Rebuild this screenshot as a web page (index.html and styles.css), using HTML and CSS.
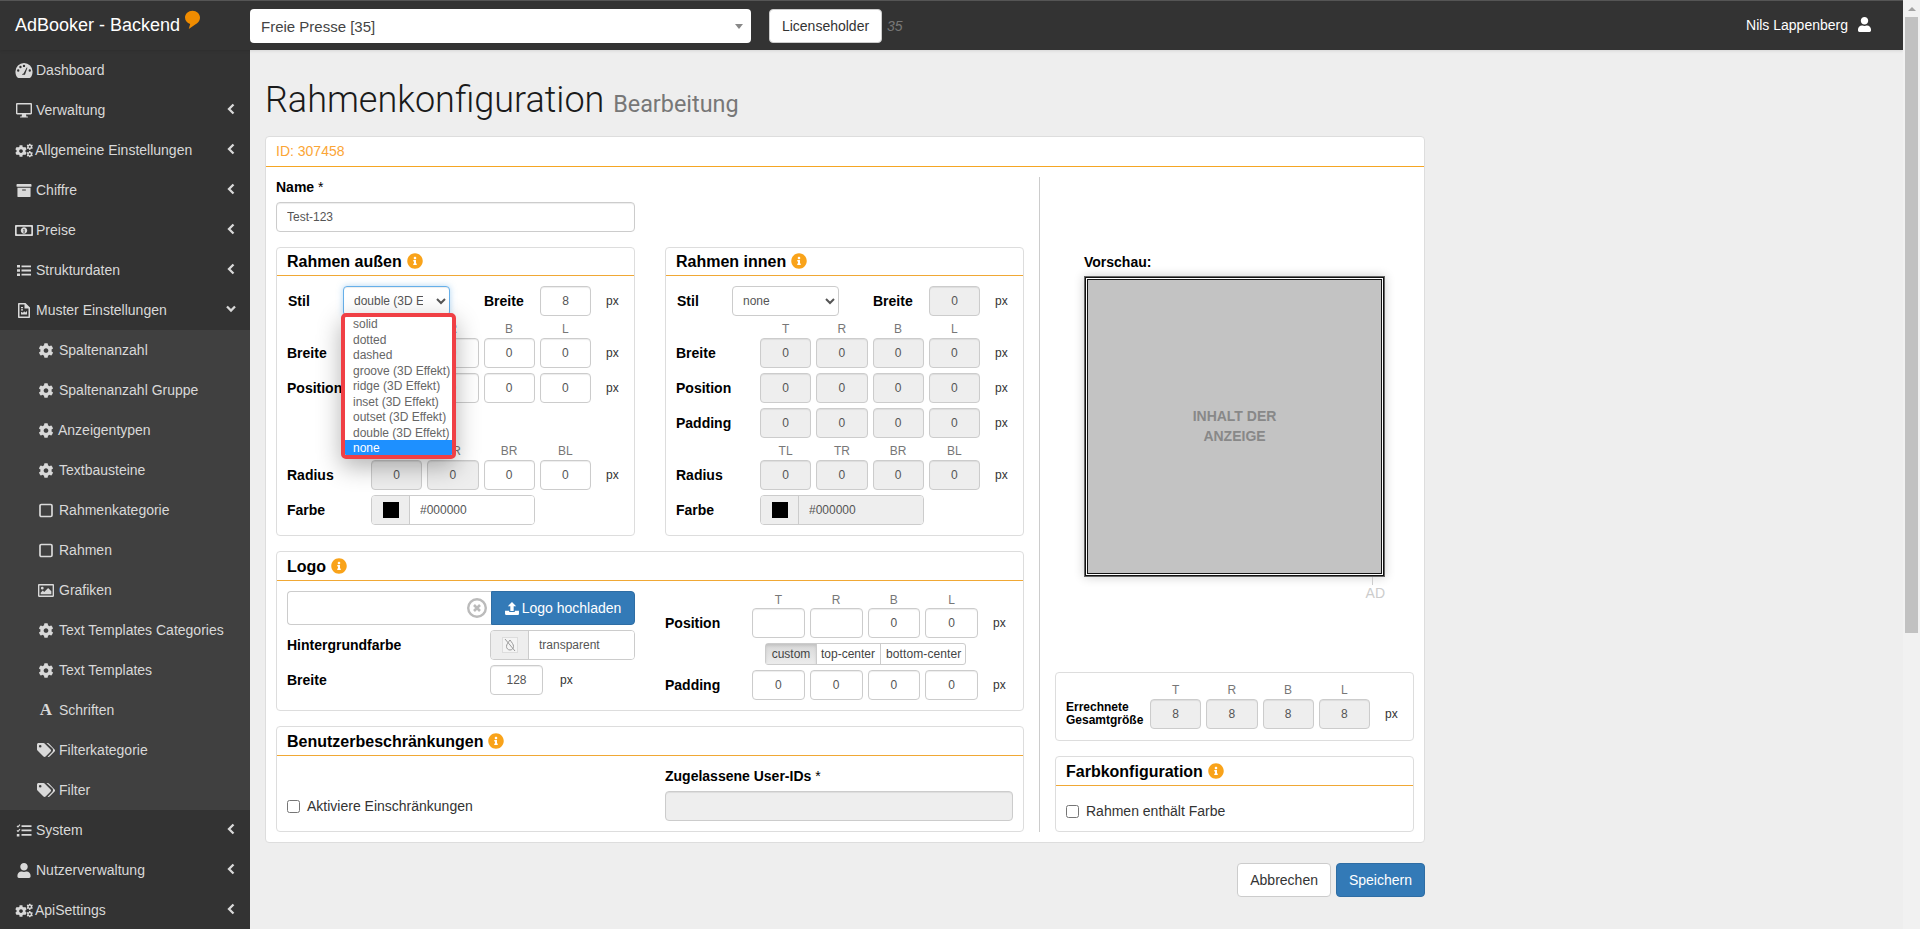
FILE: index.html
```html
<!DOCTYPE html>
<html lang="de">
<head>
<meta charset="utf-8">
<title>Rahmenkonfiguration</title>
<link rel="stylesheet" href="styles.css">
</head>
<body>
<svg class="defs" aria-hidden="true">
  <defs>
    <symbol id="i-user" viewBox="0 0 448 512"><path d="M224 256c70.7 0 128-57.3 128-128S294.7 0 224 0 96 57.3 96 128s57.3 128 128 128zm89.6 32h-16.7c-22.2 10.2-46.9 16-72.9 16s-50.6-5.8-72.9-16h-16.7C60.2 288 0 348.2 0 422.4V464c0 26.5 21.5 48 48 48h352c26.5 0 48-21.5 48-48v-41.6c0-74.2-60.2-134.4-134.4-134.4z"/></symbol>
    <symbol id="i-info" viewBox="0 0 512 512"><path d="M256 8C119 8 8 119.043 8 256c0 137 111 248 248 248s248-111 248-248C504 119.043 393 8 256 8zm0 110c23.196 0 42 18.804 42 42s-18.804 42-42 42-42-18.804-42-42 18.804-42 42-42zm56 254c0 6.627-5.373 12-12 12h-88c-6.627 0-12-5.373-12-12v-24c0-6.627 5.373-12 12-12h12v-64h-12c-6.627 0-12-5.373-12-12v-24c0-6.627 5.373-12 12-12h64c6.627 0 12 5.373 12 12v100h12c6.627 0 12 5.373 12 12v24z"/></symbol>
    <symbol id="i-cog" viewBox="0 0 512 512"><path d="M487.4 315.7l-42.6-24.6c4.3-23.2 4.3-47 0-70.2l42.6-24.6c4.9-2.8 7.1-8.6 5.5-14-11.1-35.6-30-67.8-54.7-94.6-3.8-4.1-10-5.1-14.8-2.3L380.8 110c-17.9-15.4-38.5-27.3-60.8-35.1V25.8c0-5.6-3.9-10.5-9.4-11.7-36.7-8.2-74.3-7.8-109.2 0-5.5 1.2-9.4 6.1-9.4 11.7V75c-22.2 7.9-42.8 19.8-60.8 35.1L88.7 85.5c-4.9-2.8-11-1.9-14.8 2.3-24.7 26.7-43.6 58.9-54.7 94.6-1.7 5.4.6 11.2 5.5 14L67.3 221c-4.3 23.2-4.3 47 0 70.2l-42.6 24.6c-4.9 2.8-7.1 8.6-5.5 14 11.1 35.6 30 67.8 54.7 94.6 3.8 4.1 10 5.1 14.8 2.3l42.6-24.6c17.9 15.4 38.5 27.3 60.8 35.1v49.2c0 5.6 3.9 10.5 9.4 11.7 36.7 8.2 74.3 7.8 109.2 0 5.5-1.2 9.4-6.1 9.4-11.7v-49.2c22.2-7.9 42.8-19.8 60.8-35.1l42.6 24.6c4.9 2.8 11 1.9 14.8-2.3 24.7-26.7 43.6-58.9 54.7-94.6 1.5-5.5-.7-11.3-5.6-14.1zM256 336c-44.1 0-80-35.9-80-80s35.9-80 80-80 80 35.9 80 80-35.9 80-80 80z"/></symbol>
    <symbol id="i-cogs" viewBox="0 0 18 14"><use href="#i-cog" x="0" y="1.5" width="12" height="12"/><use href="#i-cog" x="11.5" y="0" width="6.5" height="6.5"/><use href="#i-cog" x="11.5" y="7.5" width="6.5" height="6.5"/></symbol>
    <symbol id="i-gauge" viewBox="0 0 16 14"><path fill-rule="evenodd" d="M8 0a8 8 0 0 1 8 8c0 2.2-.6 4.2-1.7 5.4-.3.4-.7.6-1.2.6H2.9c-.5 0-.9-.2-1.2-.6C.6 12.2 0 10.2 0 8a8 8 0 0 1 8-8zM2.6 8.1a1.1 1.1 0 1 0 0-2.2 1.1 1.1 0 0 0 0 2.2zM4.7 4.8a1.1 1.1 0 1 0 0-2.2 1.1 1.1 0 0 0 0 2.2zM8 3.8a1.1 1.1 0 1 0 0-2.2 1.1 1.1 0 0 0 0 2.2zM13.4 8.1a1.1 1.1 0 1 0 0-2.2 1.1 1.1 0 0 0 0 2.2zM7.4 11h1.5l2.2-6.4c.1-.4-.5-.6-.7-.2L7.6 9.7c-.9.1-1.4.7-1.4 1.3z"/></symbol>
    <symbol id="i-desktop" viewBox="0 0 16 15"><path fill-rule="evenodd" d="M1.2 0h13.6c.7 0 1.2.5 1.2 1.2v9.1c0 .7-.5 1.2-1.2 1.2H10l.4 1.9h1.5v1.1H4.1v-1.1h1.5l.4-1.9H1.2C.5 11.5 0 11 0 10.3V1.2C0 .5.5 0 1.2 0zM1.4 1.4v8.7h13.2V1.4z"/></symbol>
    <symbol id="i-archive" viewBox="0 0 512 512"><path d="M32 448c0 17.7 14.3 32 32 32h384c17.7 0 32-14.3 32-32V160H32v288zm160-212c0-6.6 5.4-12 12-12h104c6.6 0 12 5.4 12 12v8c0 6.6-5.4 12-12 12H204c-6.6 0-12-5.4-12-12v-8zM480 32H32C14.3 32 0 46.3 0 64v48c0 8.8 7.2 16 16 16h480c8.8 0 16-7.2 16-16V64c0-17.7-14.3-32-32-32z"/></symbol>
    <symbol id="i-money" viewBox="0 0 18 11"><path fill-rule="evenodd" d="M.8 0h16.4c.4 0 .8.4.8.8v9.4c0 .4-.4.8-.8.8H.8c-.4 0-.8-.4-.8-.8V.8C0 .4.4 0 .8 0zM2.3 1.7 1.7 2.3v6.4l.6.6h13.4l.6-.6V2.3l-.6-.6zM9 2.3c1.8 0 3.2 1.4 3.2 3.2S10.8 8.7 9 8.7 5.8 7.3 5.8 5.5 7.2 2.3 9 2.3zM8.3 4v.7h.4v2h-.5v.7h1.7v-.7h-.4V4z"/></symbol>
    <symbol id="i-list" viewBox="-2 -2 18 15"><path d="M0 0h3v2.6H0zM4.500.4H14v1.800H4.500zM0 4.200h3v2.600H0zM4.500 4.600H14v1.800H4.500zM0 8.400h3V11H0zM4.500 8.800H14v1.800H4.500z"/></symbol>
    <symbol id="i-file" viewBox="0 0 12 15"><path fill-rule="evenodd" d="M1 0h6.500L12 4.500V14c0 .6-.4 1-1 1H1c-.6 0-1-.4-1-1V1c0-.6.4-1 1-1zM1.500 1.500v12h9V5.500H6.500v-4zM3 4h2v1.200H3zM3 6.200h2v1.200H3zM3 8.800l2 1 1.200-1.500 1 1.200L9 8v3.500H3z"/></symbol>
    <symbol id="i-square" viewBox="0 0 15 15"><rect x="1.5" y="1.5" width="12" height="12" rx="1.3" fill="none" stroke="currentColor" stroke-width="1.7"/></symbol>
    <symbol id="i-image" viewBox="0 0 15 12"><path fill-rule="evenodd" d="M1 0h13c.6 0 1 .4 1 1v10c0 .6-.4 1-1 1H1c-.6 0-1-.4-1-1V1c0-.6.4-1 1-1zM1.300 1.300v9.400h12.400V1.300zM4 2.500a1.300 1.300 0 1 1 0 2.600 1.300 1.300 0 0 1 0-2.600zM2.500 9.500V8l2-2 1.300 1.300 3.700-3.700 3 3v2.900z"/></symbol>
    <symbol id="i-tags" viewBox="0 0 18 15"><path d="M0 1.500C0 .7.700 0 1.500 0h5c.4 0 .8.200 1.100.5l6 6c.6.600.6 1.500 0 2.100l-5 5c-.6.600-1.500.600-2.100 0l-6-6C.200 7.300 0 6.900 0 6.500zM3.200 2A1.300 1.300 0 1 0 3.200 4.600 1.300 1.300 0 0 0 3.200 2z" fill-rule="evenodd"/><path d="M9.500 0h1.300c.4 0 .8.200 1.100.5l5.700 6c.6.600.6 1.500 0 2.100l-5 5c-.6.600-1.400.600-2 .1l4.700-4.800c1-1 1-2.700 0-3.700z"/></symbol>
    <symbol id="i-tasks" viewBox="-1.5 -1 18 15"><path d="M5 1.200h10v1.700H5zM5 5.600h10v1.700H5zM5 10h10v1.700H5z"/><path d="M.5 1.800 1.500 2.800 3.500.7M.5 6.300 1.500 7.300 3.500 5.200" fill="none" stroke="currentColor" stroke-width="1.2"/><path d="M.3 10h2.600v2.500H.3z"/></symbol>
    <symbol id="i-upload" viewBox="0 0 15 14"><path d="M7.500 0 12 4.600H9.300v5H5.700v-5H3z"/><path d="M0 9.300h4.500v1.400h6V9.300H15v3.700c0 .5-.4 1-1 1H1c-.6 0-1-.5-1-1z"/></symbol>
    <symbol id="i-bubble" viewBox="0 0 16 20"><path d="M8 0c4.400 0 8 3.200 8 7.300 0 3.900-2.800 6.300-5.100 7.600L4 19.500l1.500-5.300C2.300 13.300 0 10.600 0 7.300 0 3.200 3.600 0 8 0z"/></symbol>
  </defs>
</svg>

<div class="shell">
  <div class="page">
    <header class="topbar">
      <div class="brand">AdBooker - Backend<svg class="brand-mark"><use href="#i-bubble"/></svg></div>
      <div class="client-select"><span>Freie Presse [35]</span><i class="client-arrow"></i></div>
      <button class="btn top-btn" type="button">Licenseholder</button>
      <span class="client-count">35</span>
      <div class="user">Nils Lappenberg<svg class="user-ic"><use href="#i-user"/></svg></div>
    </header>

    <div class="frame">
      <nav class="sidebar">
        <a class="nav-item"><svg class="nav-ic"><use href="#i-gauge"/></svg><span>Dashboard</span></a>
        <a class="nav-item"><svg class="nav-ic"><use href="#i-desktop"/></svg><span>Verwaltung</span><svg class="caret" viewBox="0 0 8 12"><path d="M6.500 1.500 2 6l4.500 4.500"/></svg></a>
        <a class="nav-item"><svg class="nav-ic"><use href="#i-cogs"/></svg><span class="tight">Allgemeine Einstellungen</span><svg class="caret" viewBox="0 0 8 12"><path d="M6.500 1.500 2 6l4.500 4.500"/></svg></a>
        <a class="nav-item"><svg class="nav-ic"><use href="#i-archive"/></svg><span>Chiffre</span><svg class="caret" viewBox="0 0 8 12"><path d="M6.500 1.500 2 6l4.500 4.500"/></svg></a>
        <a class="nav-item"><svg class="nav-ic"><use href="#i-money"/></svg><span>Preise</span><svg class="caret" viewBox="0 0 8 12"><path d="M6.500 1.500 2 6l4.500 4.500"/></svg></a>
        <a class="nav-item"><svg class="nav-ic"><use href="#i-list"/></svg><span>Strukturdaten</span><svg class="caret" viewBox="0 0 8 12"><path d="M6.500 1.500 2 6l4.500 4.500"/></svg></a>
        <a class="nav-item"><svg class="nav-ic"><use href="#i-file"/></svg><span>Muster Einstellungen</span><svg class="caret caret--down" viewBox="0 0 10 8"><path d="M1 1.500 5 5.500l4-4"/></svg></a>
        <div class="nav-sub">
          <a class="nav-item"><svg class="nav-ic"><use href="#i-cog"/></svg><span>Spaltenanzahl</span></a>
          <a class="nav-item"><svg class="nav-ic"><use href="#i-cog"/></svg><span>Spaltenanzahl Gruppe</span></a>
          <a class="nav-item"><svg class="nav-ic"><use href="#i-cog"/></svg><span class="tight">Anzeigentypen</span></a>
          <a class="nav-item"><svg class="nav-ic"><use href="#i-cog"/></svg><span>Textbausteine</span></a>
          <a class="nav-item"><svg class="nav-ic"><use href="#i-square"/></svg><span>Rahmenkategorie</span></a>
          <a class="nav-item"><svg class="nav-ic"><use href="#i-square"/></svg><span>Rahmen</span></a>
          <a class="nav-item"><svg class="nav-ic"><use href="#i-image"/></svg><span>Grafiken</span></a>
          <a class="nav-item"><svg class="nav-ic"><use href="#i-cog"/></svg><span>Text Templates Categories</span></a>
          <a class="nav-item"><svg class="nav-ic"><use href="#i-cog"/></svg><span>Text Templates</span></a>
          <a class="nav-item"><b class="nav-glyph" aria-hidden="true">A</b><span>Schriften</span></a>
          <a class="nav-item"><svg class="nav-ic nav-ic--wide"><use href="#i-tags"/></svg><span>Filterkategorie</span></a>
          <a class="nav-item"><svg class="nav-ic nav-ic--wide"><use href="#i-tags"/></svg><span>Filter</span></a>
        </div>
        <a class="nav-item"><svg class="nav-ic"><use href="#i-tasks"/></svg><span>System</span><svg class="caret" viewBox="0 0 8 12"><path d="M6.500 1.500 2 6l4.500 4.500"/></svg></a>
        <a class="nav-item"><svg class="nav-ic"><use href="#i-user"/></svg><span>Nutzerverwaltung</span><svg class="caret" viewBox="0 0 8 12"><path d="M6.500 1.500 2 6l4.500 4.500"/></svg></a>
        <a class="nav-item"><svg class="nav-ic"><use href="#i-cogs"/></svg><span class="tight">ApiSettings</span><svg class="caret" viewBox="0 0 8 12"><path d="M6.500 1.500 2 6l4.500 4.500"/></svg></a>
      </nav>

      <main class="content">
        <h1 class="title">Rahmenkonfiguration <small>Bearbeitung</small></h1>

        <div class="card">
          <div class="card-head">ID: 307458</div>
          <div class="card-body">
            <div class="form-main">
              <label class="field-label">Name <span class="req">*</span></label>
              <input class="fi fi--left name-input" type="text" value="Test-123">

              <div class="panel-pair">
                <section class="panel">
                  <h3 class="panel-head">Rahmen außen <svg class="info"><use href="#i-info"/></svg></h3>
                  <div class="panel-body">
                    <div class="stil-row">
                      <b class="stil-label">Stil</b>
                      <select class="sel sel--focus"><option>solid</option><option selected>double (3D Effekt)</option><option>none</option></select>
                      <b class="stil-breite">Breite</b>
                      <input class="fi stil-input" value="8">
                      <span class="px">px</span>
                    </div>
                    <div class="grid4 heads"><i></i><span>T</span><span>R</span><span>B</span><span>L</span></div>
                    <div class="grid4"><b>Breite</b><input class="fi" disabled value="0"><input class="fi" value="0"><input class="fi" value="0"><input class="fi" value="0"><span class="px">px</span></div>
                    <div class="grid4"><b>Position</b><input class="fi" value="0"><input class="fi" value="0"><input class="fi" value="0"><input class="fi" value="0"><span class="px">px</span></div>
                    <div class="grid4 empty-row"></div>
                    <div class="grid4 heads"><i></i><span>TL</span><span>TR</span><span>BR</span><span>BL</span></div>
                    <div class="grid4"><b>Radius</b><input class="fi" disabled value="0"><input class="fi" disabled value="0"><input class="fi" value="0"><input class="fi" value="0"><span class="px">px</span></div>
                    <div class="grid4"><b>Farbe</b><div class="color-group"><span class="color-add"><i class="swatch"></i></span><input class="color-val" value="#000000"></div></div>
                  </div>
                  <ul class="select-pop">
                    <li>solid</li><li>dotted</li><li>dashed</li><li>groove (3D Effekt)</li><li>ridge (3D Effekt)</li><li>inset (3D Effekt)</li><li>outset (3D Effekt)</li><li>double (3D Effekt)</li><li class="is-active">none</li>
                  </ul>
                </section>

                <section class="panel">
                  <h3 class="panel-head">Rahmen innen <svg class="info"><use href="#i-info"/></svg></h3>
                  <div class="panel-body">
                    <div class="stil-row">
                      <b class="stil-label">Stil</b>
                      <select class="sel"><option>none</option></select>
                      <b class="stil-breite">Breite</b>
                      <input class="fi stil-input" disabled value="0">
                      <span class="px">px</span>
                    </div>
                    <div class="grid4 heads"><i></i><span>T</span><span>R</span><span>B</span><span>L</span></div>
                    <div class="grid4"><b>Breite</b><input class="fi" disabled value="0"><input class="fi" disabled value="0"><input class="fi" disabled value="0"><input class="fi" disabled value="0"><span class="px">px</span></div>
                    <div class="grid4"><b>Position</b><input class="fi" disabled value="0"><input class="fi" disabled value="0"><input class="fi" disabled value="0"><input class="fi" disabled value="0"><span class="px">px</span></div>
                    <div class="grid4"><b>Padding</b><input class="fi" disabled value="0"><input class="fi" disabled value="0"><input class="fi" disabled value="0"><input class="fi" disabled value="0"><span class="px">px</span></div>
                    <div class="grid4 heads"><i></i><span>TL</span><span>TR</span><span>BR</span><span>BL</span></div>
                    <div class="grid4"><b>Radius</b><input class="fi" disabled value="0"><input class="fi" disabled value="0"><input class="fi" disabled value="0"><input class="fi" disabled value="0"><span class="px">px</span></div>
                    <div class="grid4"><b>Farbe</b><div class="color-group"><span class="color-add"><i class="swatch"></i></span><input class="color-val" disabled value="#000000"></div></div>
                  </div>
                </section>
              </div>

              <section class="panel panel--stack">
                <h3 class="panel-head panel-head--tall">Logo <svg class="info"><use href="#i-info"/></svg></h3>
                <div class="panel-body panel-split">
                  <div class="logo-left">
                    <div class="upload-row">
                      <div class="upload-input">
                        <svg class="clear-ic" viewBox="0 0 20 20"><circle cx="10" cy="10" r="8.8" fill="none" stroke="#bbb" stroke-width="2.4"/><path d="M7 7l6 6M13 7l-6 6" stroke="#bbb" stroke-width="2.6"/></svg>
                      </div>
                      <button class="btn btn--primary upload-btn" type="button"><svg class="upload-ic"><use href="#i-upload"/></svg>Logo hochladen</button>
                    </div>
                    <div class="logo-row">
                      <b>Hintergrundfarbe</b>
                      <div class="color-group color-group--logo">
                        <span class="color-add"><svg class="none-swatch" viewBox="0 0 16 16"><rect x=".5" y=".5" width="15" height="15" fill="#f4f4f4" stroke="#ddd"/><path d="M8 3c1.800 2.500 3.500 4.400 3.500 6.300A3.500 3.500 0 0 1 8 13a3.500 3.500 0 0 1-3.500-3.700C4.500 7.400 6.200 5.500 8 3zM3 2l10 12" fill="none" stroke="#999"/></svg></span>
                        <input class="color-val" value="transparent">
                      </div>
                    </div>
                    <div class="logo-row">
                      <b>Breite</b>
                      <input class="fi logo-width" value="128">
                      <span class="px logo-px">px</span>
                    </div>
                  </div>
                  <div class="logo-right">
                    <div class="logo-grid heads heads--logo"><i></i><span>T</span><span>R</span><span>B</span><span>L</span></div>
                    <div class="logo-grid"><b>Position</b><input class="fi" value=""><input class="fi" value=""><input class="fi" value="0"><input class="fi" value="0"><span class="px">px</span></div>
                    <div class="logo-btns">
                      <div class="btn-group"><span class="seg seg--custom is-active">custom</span><span class="seg seg--top">top-center</span><span class="seg seg--bottom">bottom-center</span></div>
                    </div>
                    <div class="logo-grid"><b>Padding</b><input class="fi" value="0"><input class="fi" value="0"><input class="fi" value="0"><input class="fi" value="0"><span class="px">px</span></div>
                  </div>
                </div>
              </section>

              <section class="panel panel--stack">
                <h3 class="panel-head panel-head--tall">Benutzerbeschränkungen <svg class="info"><use href="#i-info"/></svg></h3>
                <div class="panel-body panel-split">
                  <label class="check check--users"><input type="checkbox"><span>Aktiviere Einschränkungen</span></label>
                  <div class="users-field">
                    <label class="field-label">Zugelassene User-IDs <span class="req">*</span></label>
                    <input class="fi fi--left" disabled value="">
                  </div>
                </div>
              </section>
            </div>

            <aside class="form-side">
              <div class="preview">
                <label class="field-label preview-label">Vorschau:</label>
                <div class="preview-box"><span class="preview-text">INHALT DER ANZEIGE</span></div>
                <i class="ad-tick"></i>
                <div class="ad-label">AD</div>
              </div>

              <section class="panel total-panel">
                <div class="grid4 heads heads--total"><i></i><span>T</span><span>R</span><span>B</span><span>L</span></div>
                <div class="grid4"><b class="total-label">Errechnete Gesamtgröße</b><input class="fi" disabled value="8"><input class="fi" disabled value="8"><input class="fi" disabled value="8"><input class="fi" disabled value="8"><span class="px">px</span></div>
              </section>

              <section class="panel panel--color">
                <h3 class="panel-head panel-head--tall">Farbkonfiguration <svg class="info"><use href="#i-info"/></svg></h3>
                <label class="check check--color"><input type="checkbox"><span>Rahmen enthält Farbe</span></label>
              </section>
            </aside>
          </div>
        </div>

        <div class="actions">
          <button class="btn" type="button">Abbrechen</button>
          <button class="btn btn--primary" type="button">Speichern</button>
        </div>
      </main>
    </div>
  </div>

  <div class="scrollbar"><i class="scroll-up"></i><i class="scroll-thumb"></i></div>
</div>
</body>
</html>
```
FILE: styles.css
```css
* { box-sizing: border-box; }
html, body { margin: 0; height: 929px; overflow: hidden; }
body { font: 14px/20px "Liberation Sans", Arial, sans-serif; color: #333; background: #eee; }
.defs { width: 0; height: 0; display: block; position: absolute; }
h1, h3, ul { margin: 0; padding: 0; }
i { font-style: normal; }

.shell { display: flex; height: 929px; }
.page { flex: 1; min-width: 0; display: flex; flex-direction: column; overflow: hidden; }
.scrollbar { width: 17px; flex: none; background: #f1f1f1; display: flex; flex-direction: column; align-items: center; }
.scroll-up { width: 0; height: 0; margin: 7px 0 6px; border: 4px solid transparent; border-top: 0; border-bottom: 4px solid #a3a3a3; }
.scroll-thumb { width: 13px; height: 616px; background: #c1c1c1; }

/* top bar */
.topbar { height: 50px; flex: none; background: #333; border-top: 1px solid #555; display: flex; padding-top: 8px; box-shadow: 0 1px 3px rgba(0,0,0,.1); position: relative; z-index: 2; }
.brand { width: 250px; flex: none; padding-left: 15px; font-size: 18px; line-height: 33px; color: #fff; position: relative; }
.brand-mark { position: absolute; left: 185px; top: 1px; width: 15px; height: 20px; fill: #f08c00; }
.client-select { width: 501px; height: 34px; background: #fff; border-radius: 4px; padding: 0 11px; font-size: 15px; line-height: 35px; color: #444; display: flex; justify-content: space-between; align-items: center; }
.client-arrow { width: 0; height: 0; border: 4px solid transparent; border-bottom: 0; border-top: 5px solid #888; margin-right: -3px; }
.btn { font: 14px/20px "Liberation Sans", Arial, sans-serif; color: #333; background: #fff; border: 1px solid #ccc; border-radius: 4px; padding: 6px 12px; height: 34px; }
.btn--primary { background: #337ab7; border-color: #2e6da4; color: #fff; }
.top-btn { margin-left: 18px; width: 113px; padding: 6px 0; }
.client-count { margin-left: 5px; line-height: 34px; color: #777; font-style: italic; }
.user { margin-left: auto; padding-right: 32px; display: flex; align-items: flex-start; color: #fff; line-height: 33px; }
.user-ic { width: 13px; height: 15px; margin: 8px 0 0 10px; fill: #fff; }

.frame { flex: 1; min-height: 0; display: flex; }

/* sidebar */
.sidebar { width: 250px; flex: none; background: #333; color: #d9d9d9; }
.nav-item { display: flex; align-items: center; height: 40px; padding: 0 15px; }
.nav-ic { width: 18px; height: 15px; flex: none; margin-right: 3px; fill: currentColor; color: #d9d9d9; }
.tight { margin-left: -1px; }
.caret { width: 8px; height: 12px; margin: -3px 0 0 auto; fill: none; stroke: #d9d9d9; stroke-width: 2.3; }
.caret--down { width: 10px; height: 8px; margin-right: -1px; }
.nav-sub { background: #404040; }
.nav-sub .nav-item { padding-left: 38px; }
.nav-sub .nav-ic { width: 16px; margin-right: 5px; }
.nav-sub .nav-ic--wide { width: 18px; margin: 0 4px 0 -1px; }
.nav-glyph { width: 16px; margin-right: 5px; text-align: center; font: bold 17px/20px "Liberation Serif", serif; color: #d9d9d9; }

/* content */
.content { flex: 1; min-width: 0; padding: 0 15px; background: #eee; }
.title { padding-top: 30px; margin-bottom: 17px; height: 69px; font: 300 36px/40px Roboto, sans-serif; color: #1a1a1a; }
.title small { font-size: 23.4px; font-weight: 400; color: #777; }

.card { width: 1160px; background: #fff; border: 1px solid #ddd; border-radius: 4px; }
.card-head { height: 30px; border-bottom: 1px solid #f5a623; padding: 4px 10px 0; color: #fba536; line-height: 20px; }
.card-body { display: flex; padding: 10px; }
.form-main { flex: none; width: 748px; padding-right: 15px; border-right: 1px solid #ccc; box-sizing: content-box; }
.form-side { flex: 1; padding-left: 15px; min-width: 0; }
.field-label { display: block; font-weight: bold; color: #000; height: 20px; margin-bottom: 5px; }
.req { font-weight: normal; }

.fi { width: 100%; height: 30px; border: 1px solid #ccc; border-radius: 4px; background: #fff; font: 12px "Liberation Sans", Arial, sans-serif; color: #555; text-align: center; padding: 0; min-width: 0; box-shadow: inset 0 1px 1px rgba(0,0,0,.075); outline: 0; }
.fi:disabled { background: #eee; color: #555; }
.fi--left { text-align: left; padding: 0 10px; }
.name-input { width: 359px; display: block; }
.px { font-size: 12px; color: #333; padding-left: 10px; line-height: 14px; margin-top: -1px; }

.panel { border: 1px solid #ddd; border-radius: 4px; background: #fff; position: relative; }
.panel-pair { display: grid; grid-template-columns: 359px 359px; column-gap: 30px; margin-top: 15px; }
.panel--stack { margin-top: 15px; }
.panel-head { height: 28px; border-bottom: 1px solid #f0a835; padding-left: 10px; font: bold 16px/25px "Liberation Sans", Arial, sans-serif; color: #000; display: flex; align-items: center; gap: 5px; }
.panel-head--tall { height: 29px; }
.info { width: 16px; height: 16px; fill: #f9a31a; flex: none; margin-top: -1px; }
.panel-body { padding: 10px 0 10px 10px; }

.stil-row { display: flex; align-items: center; height: 30px; }
.stil-row b { color: #000; }
.stil-row .px { padding-left: 15px; }
.stil-label { width: 56px; padding-left: 1px; flex: none; }
.sel { width: 107px; height: 30px; flex: none; border: 1px solid #ccc; border-radius: 4px; background: #fff; font: 12px "Liberation Sans", Arial, sans-serif; color: #555; padding: 0 10px 0 6px; outline: 0; }
.sel--focus { border-color: #66afe9; box-shadow: inset 0 1px 1px rgba(0,0,0,.075), 0 0 6px rgba(102,175,233,.5); }
.stil-breite { width: 56px; margin-left: 34px; flex: none; }
.stil-input { width: 51px; flex: none; }

.grid4 { display: grid; grid-template-columns: 79px repeat(4, 51.25px) 1fr; column-gap: 5px; align-items: center; height: 30px; margin-top: 5px; }
.grid4 b { color: #000; }
.heads { height: 22px; margin-top: 0; color: #777; font-size: 12px; line-height: 16px; padding-top: 5px; align-items: start; text-align: center; }
.heads + .grid4 { margin-top: 0; }
.color-group { grid-column: 2 / span 3; display: flex; height: 30px; border: 1px solid #ccc; border-radius: 4px; overflow: hidden; }
.color-add { width: 38px; flex: none; background: #eee; border-right: 1px solid #ccc; display: flex; align-items: center; justify-content: center; }
.swatch { width: 16px; height: 16px; background: #000; }
.color-val { flex: 1; min-width: 0; border: 0; padding: 0 10px; font: 12px "Liberation Sans", Arial, sans-serif; color: #555; background: #fff; outline: 0; }
.color-val:disabled { background: #eee; color: #555; }

/* open list of the first select */
.select-pop { position: absolute; left: 64px; top: 65px; width: 115px; height: 146px; border: 4px solid #f04045; border-radius: 5px; background: #fff; list-style: none; font-size: 12px; color: #666; box-shadow: 0 8px 24px rgba(0,0,0,.3); z-index: 3; overflow: hidden; }
.select-pop li { height: 15.5px; line-height: 17px; padding-left: 8px; white-space: nowrap; }
.select-pop li:first-child { margin-top: -1px; }
.select-pop .is-active { background: #1e90ff; color: #fff; }

/* logo */
.panel-split { display: grid; grid-template-columns: 348px 1fr; column-gap: 30px; padding-right: 10px; }
.logo-left b, .logo-right b { color: #000; }
.upload-row { display: flex; height: 34px; }
.upload-input { flex: 1; border: 1px solid #ccc; border-right: 0; border-radius: 4px 0 0 4px; display: flex; align-items: center; justify-content: flex-end; padding-right: 4px; }
.clear-ic { width: 20px; height: 20px; }
.upload-btn { width: 144px; flex: none; border-radius: 0 4px 4px 0; padding: 0; display: flex; align-items: center; justify-content: center; gap: 3px; }
.upload-ic { width: 14px; height: 13px; fill: #fff; }
.logo-row { display: flex; align-items: center; height: 30px; margin-top: 5px; }
.logo-row b { width: 203px; flex: none; }
.color-group--logo { width: 145px; }
.none-swatch { width: 16px; height: 16px; }
.logo-width { width: 53px; }
.logo-px { padding-left: 17px; }
.logo-grid { display: grid; grid-template-columns: 82px repeat(4, 52.75px) 1fr; column-gap: 5px; align-items: center; height: 30px; }
.heads--logo { height: 17px; padding-top: 0; line-height: 14px; }
.logo-btns { display: flex; height: 22px; margin: 5px 0; padding-left: 100px; }
.btn-group { display: flex; height: 22px; border: 1px solid #ccc; border-radius: 3px; font-size: 12px; line-height: 20px; color: #444; white-space: nowrap; }
.seg { padding-left: 4px; border-left: 1px solid #ccc; }
.seg--custom { border-left: 0; width: 50px; padding: 0; text-align: center; }
.seg--top { width: 64px; }
.seg--bottom { width: 85px; padding-left: 5px; letter-spacing: .1px; }
.seg.is-active { background: linear-gradient(#d8d8d8, #ececec); box-shadow: inset 0 2px 3px rgba(0,0,0,.1); }

/* user limits */
.check { display: flex; align-items: center; color: #333; }
.check input { width: 13px; height: 13px; margin: 0 7px 0 0; flex: none; }
.check--users { align-self: end; height: 30px; }

/* side */
.preview { width: 301px; margin: 75px 0 0 29px; }
.preview-label { margin-bottom: 4px; }
.preview-box { width: 301px; height: 301px; border: 1px solid #666; background: #c3c3c3; box-shadow: inset 0 0 0 1px #111, inset 0 0 0 2px #fff, inset 0 0 0 3px #111, 0 0 10px rgba(0,0,0,.2); display: flex; align-items: center; justify-content: center; padding-bottom: 2px; }
.preview-text { width: 110px; text-align: center; font-weight: bold; color: #888; }
.ad-tick { display: block; width: 1px; height: 8px; background: #ccc; margin-left: 288px; }
.ad-label { text-align: right; color: #ccc; line-height: 16px; }
.total-panel { height: 69px; margin-top: 71px; padding-left: 10px; }
.heads--total { height: 26px; padding-top: 9px; }
.total-label { font-size: 12px; line-height: 13px; }
.panel--color { height: 76px; margin-top: 15px; }
.check--color { height: 46px; padding: 4px 0 0 10px; }

.actions { display: flex; justify-content: flex-end; gap: 5px; width: 1160px; margin-top: 20px; }
```
